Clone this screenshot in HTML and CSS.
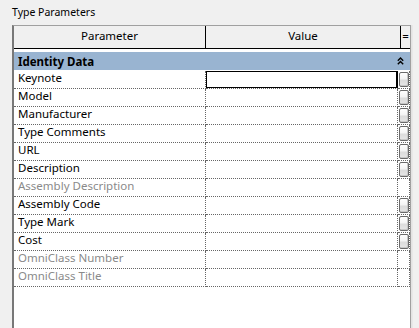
FILE: index.html
```html
<!DOCTYPE html>
<html lang="en">
<head>
    <meta charset="UTF-8">
    <title>Type Parameters</title>
    <link rel="stylesheet" href="styles.css">
</head>
<body>
    <div class="panel">
        <div class="title">Type Parameters</div>
        <div class="grid">
            <div class="head">
                <div class="hc c-name">Parameter</div>
                <div class="hc c-value">Value</div>
                <div class="hc c-eq">=</div>
            </div>
            <div class="gap"></div>
            <div class="group">
                <span>Identity Data</span>
                <svg class="collapse" width="7" height="8" viewBox="0 0 7 8">
                    <polyline points="0.8,3.8 3.5,1.1 6.2,3.8" fill="none" stroke="#000" stroke-width="1.4"/>
                    <polyline points="0.8,7.3 3.5,4.6 6.2,7.3" fill="none" stroke="#000" stroke-width="1.4"/>
                </svg>
            </div>
            <div class="sep"></div>

            <div class="row">
                <div class="name">Keynote</div>
                <div class="value active"><div class="edit"></div></div>
                <div class="extra"><span class="btn"></span></div>
            </div>
            <div class="row">
                <div class="name">Model</div>
                <div class="value"></div>
                <div class="extra"><span class="btn"></span></div>
            </div>
            <div class="row">
                <div class="name">Manufacturer</div>
                <div class="value"></div>
                <div class="extra"><span class="btn"></span></div>
            </div>
            <div class="row">
                <div class="name">Type Comments</div>
                <div class="value"></div>
                <div class="extra"><span class="btn"></span></div>
            </div>
            <div class="row">
                <div class="name">URL</div>
                <div class="value"></div>
                <div class="extra"><span class="btn"></span></div>
            </div>
            <div class="row">
                <div class="name">Description</div>
                <div class="value"></div>
                <div class="extra"><span class="btn"></span></div>
            </div>
            <div class="row">
                <div class="name disabled">Assembly Description</div>
                <div class="value"></div>
                <div class="extra"></div>
            </div>
            <div class="row">
                <div class="name">Assembly Code</div>
                <div class="value"></div>
                <div class="extra"><span class="btn"></span></div>
            </div>
            <div class="row">
                <div class="name">Type Mark</div>
                <div class="value"></div>
                <div class="extra"><span class="btn"></span></div>
            </div>
            <div class="row">
                <div class="name">Cost</div>
                <div class="value"></div>
                <div class="extra"><span class="btn"></span></div>
            </div>
            <div class="row">
                <div class="name disabled">OmniClass Number</div>
                <div class="value"></div>
                <div class="extra"></div>
            </div>
            <div class="row">
                <div class="name disabled">OmniClass Title</div>
                <div class="value"></div>
                <div class="extra"></div>
            </div>
        </div>
    </div>
</body>
</html>
```

FILE: styles.css
```css
html, body {
    margin: 0;
    padding: 0;
    height: 100%;
    background: #f0f0f0;
    font-family: "Noto Sans", "Open Sans", sans-serif;
    font-size: 11.5px;
    color: #000;
    overflow: hidden;
}

.panel {
    height: 100%;
    display: flex;
    flex-direction: column;
}

.title {
    height: 25px;
    line-height: 24px;
    padding-left: 12px;
    box-sizing: border-box;
    font-size: 10.5px;
}

.grid {
    flex-grow: 1;
    margin-left: 12px;
    width: 399px;
    box-sizing: border-box;
    background: #fff;
    border-top: 1px solid #a0a0a0;
    border-left: 2px solid #787878;
    border-right: 1px solid #a0a0a0;
    box-shadow: 1px 0 0 #e3e3e3, 2px 0 0 #e8e8e8;
}

.head {
    display: flex;
    height: 22px;
    background: #f0f0f0;
    border-bottom: 1px solid #000;
}

.hc {
    box-sizing: border-box;
    line-height: 19px;
    text-align: center;
    border-right: 1px solid #000;
}

.c-name { width: 192px; }
.c-value { width: 195px; }
.c-eq { width: 9px; border-right: none; }

.gap {
    height: 3px;
}

.group {
    height: 18px;
    background: #99b4d1;
    display: flex;
    justify-content: space-between;
    align-items: center;
    padding: 0 6px 0 4px;
    font-weight: bold;
}

.collapse {
    display: block;
}

.sep {
    height: 1px;
}

.row {
    display: flex;
    height: 18px;
}

.row > div {
    box-sizing: border-box;
    height: 18px;
    border-bottom: 1px dotted #666;
}

.name {
    width: 192px;
    padding-left: 4px;
    line-height: 14px;
    border-right: 1px dotted #666;
    white-space: nowrap;
}

.name.disabled {
    color: #8a8a8a;
}

.value {
    width: 192px;
    border-right: 1px dotted #666;
}

.value.active {
    border-right: none;
}

.edit {
    height: 17px;
    box-sizing: border-box;
    border: 1px solid #000;
    border-right-width: 2px;
}

.extra {
    width: 12px;
    border-right: 1px dotted #666;
    padding: 1px 0 0 1px;
}

.btn {
    display: block;
    width: 8px;
    height: 13px;
    border: 1px solid #6a6a6a;
    border-radius: 2px;
    background: linear-gradient(#ffffff, #f4f4f4 45%, #dcdcdc 55%, #e6e6e6);
    box-shadow: inset -1px -1px 0 #c8c8c8;
}
```
